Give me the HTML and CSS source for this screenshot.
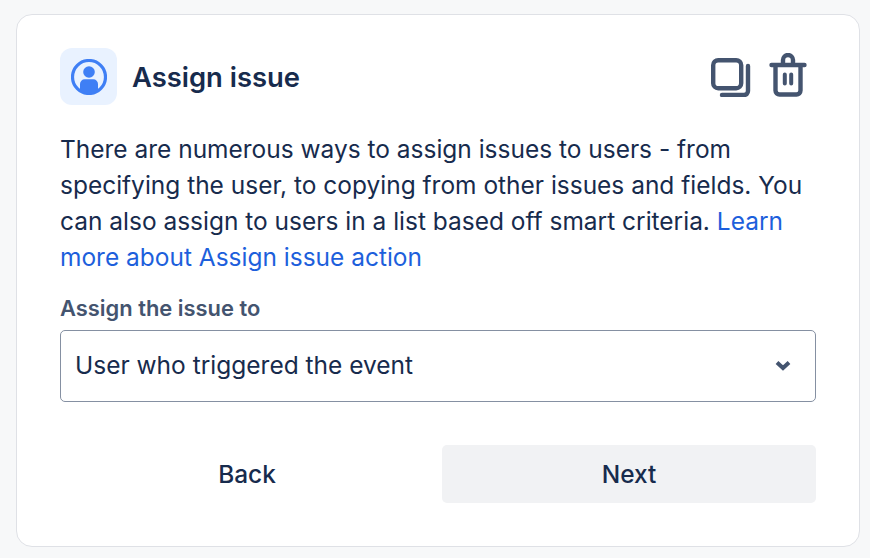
FILE: index.html
```html
<!DOCTYPE html>
<html lang="en">
<head>
<meta charset="utf-8">
<title>Assign issue</title>
<link rel="stylesheet" href="styles.css">
</head>
<body>
<main class="card">
  <header class="head">
    <div class="badge">
      <svg class="badge-icon" viewBox="0 0 36 36" width="36" height="36" aria-hidden="true">
        <circle cx="18" cy="18" r="16.500" fill="none" stroke="#3f7ff5" stroke-width="3.200"/>
        <circle cx="18" cy="13" r="5.800" fill="#3f7ff5"/>
        <path d="M9 32v-7a4.700 4.700 0 0 1 4.700-4.700h8.600A4.700 4.700 0 0 1 27 25v7a16 16 0 0 1-18 0z" fill="#3f7ff5"/>
      </svg>
    </div>
    <h1 class="title">Assign issue</h1>
    <div class="actions">
      <svg viewBox="0 0 40 44" width="40" height="44" aria-hidden="true" class="icon">
        <rect x="2.200" y="7.200" width="28" height="28" rx="5" fill="none" stroke="#44546f" stroke-width="4.400"/>
        <path d="M37 13v25a4 4 0 0 1-4 4H11" fill="none" stroke="#44546f" stroke-width="4.400" stroke-linecap="round"/>
      </svg>
      <svg viewBox="0 0 40 44" width="40" height="44" aria-hidden="true" class="icon">
        <path d="M3.500 12h33M15 12V7a5 5 0 0 1 10 0v5M7.500 13v24.500a4 4 0 0 0 4 4h17a4 4 0 0 0 4-4V13" fill="none" stroke="#44546f" stroke-width="4.400" stroke-linecap="round" stroke-linejoin="round"/>
        <path d="M16.800 21.500v9M23.200 21.500v9" fill="none" stroke="#44546f" stroke-width="4" stroke-linecap="round"/>
      </svg>
    </div>
  </header>
  <p class="desc">There are numerous ways to assign issues to users - from specifying the user, to copying from other issues and fields. You can also assign to users in a list based off smart criteria. <a class="link" href="#">Learn more about Assign issue action</a></p>
  <label class="label" for="assign">Assign the issue to</label>
  <div class="select" id="assign">
    <span>User who triggered the event</span>
    <svg viewBox="0 0 16 12" width="16" height="12" aria-hidden="true">
      <path d="M2 2.500L8 8l6-5.500" fill="none" stroke="#44546f" stroke-width="4"/>
    </svg>
  </div>
  <div class="buttons">
    <button class="btn" type="button">Back</button>
    <button class="btn btn-next" type="button">Next</button>
  </div>
</main>
</body>
</html>
```
FILE: styles.css
```css
* { box-sizing: border-box; }
html, body { margin: 0; height: 100%; }
body {
  background: #f7f8f9;
  font-family: Inter, "Liberation Sans", sans-serif;
  color: #172b4d;
  padding: 14px 10px 11px 16px;
}
.card {
  width: 844px;
  height: 533px;
  background: #fff;
  border: 1px solid #dfe1e6;
  border-radius: 16px;
  padding: 33px 43px 0;
}
.head { display: flex; align-items: center; height: 57px; }
.badge {
  width: 57px;
  height: 57px;
  border-radius: 12px;
  background: #e9f2ff;
  display: flex;
  align-items: center;
  justify-content: center;
}
.title { margin: 0 0 0 15px; font-size: 27.4px; line-height: 36px; font-weight: 600; }
.actions { margin-left: auto; display: flex; gap: 17px; padding-right: 8.500px; margin-bottom: 4px; }
.desc { margin: 26px 0 0; font-size: 24.480px; line-height: 36px; font-weight: 440; }
.link { color: #1d5fdc; text-decoration: none; }
.label { display: block; margin-top: 21px; font-size: 21.900px; line-height: 24px; font-weight: 600; color: #44546f; }
.select {
  margin-top: 10px;
  height: 72px;
  border: 1px solid #8590a2;
  border-radius: 5px;
  padding: 0 24px 2px 14px;
  display: flex;
  align-items: center;
  justify-content: space-between;
  font-size: 24.500px;
  font-weight: 440;
}
.select svg { margin-top: 2px; }
.buttons { display: flex; gap: 8px; margin-top: 43px; }
.btn {
  flex: 1;
  height: 58px;
  border: 0;
  border-radius: 5px;
  background: transparent;
  font: 500 24.4px Inter, "Liberation Sans", sans-serif;
  color: #172b4d;
}
.btn-next { background: #f1f2f4; }
```
